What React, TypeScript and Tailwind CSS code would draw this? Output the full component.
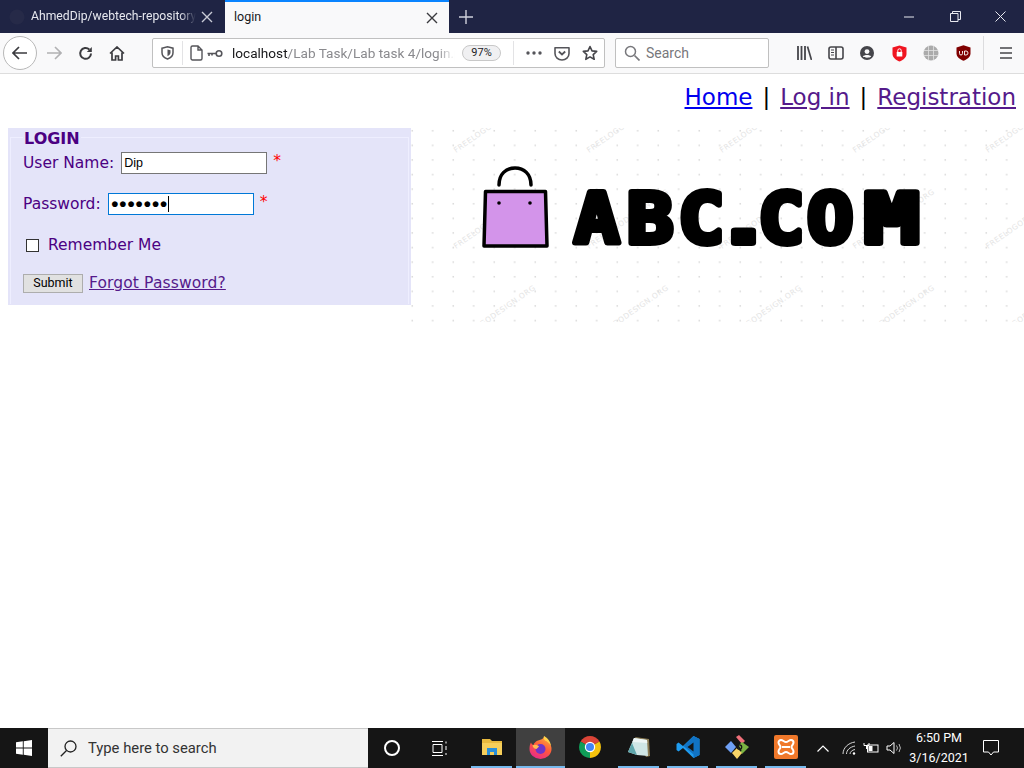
import React from "react";

const sans = "font-['DejaVu_Sans',sans-serif]";
const ui = "font-['Roboto',sans-serif]";

function Ic({ w = 16, h = 16, vb, children, className = "" }: { w?: number; h?: number; vb?: string; children: React.ReactNode; className?: string }) {
  return (
    <svg width={w} height={h} viewBox={vb ?? `0 0 ${w} ${h}`} fill="none" className={"shrink-0 " + className}>
      {children}
    </svg>
  );
}

function TitleBar() {
  return (
    <div className="flex h-[33px] shrink-0 items-stretch bg-[#1f2444]">
      <div className="flex w-[225px] items-center pl-[9px] pr-[12px]">
        <Ic w={16} h={16}>
          <circle cx="8" cy="8" r="7.5" fill="#262a48" />
        </Ic>
        <span className={`ml-[6px] w-[165px] overflow-hidden whitespace-nowrap text-[12.2px] text-[#e6e7ee] ${ui} [mask-image:linear-gradient(to_right,black_90%,transparent)]`}>
          AhmedDip/webtech-repository
        </span>
        <Ic w={12} h={12} className="ml-auto">
          <path d="M1 1l10 10M11 1L1 11" stroke="#c9cbd6" strokeWidth="1.4" />
        </Ic>
      </div>
      <div className="flex w-[224px] items-center border-t-2 border-[#0a84ff] bg-[#f9f9fa] pl-[9px] pr-[11px]">
        <span className={`text-[12.5px] text-[#18181a] ${ui}`}>login</span>
        <Ic w={12} h={12} className="ml-auto">
          <path d="M1 1l10 10M11 1L1 11" stroke="#3a3a3e" strokeWidth="1.4" />
        </Ic>
      </div>
      <div className="ml-[10px] flex items-center">
        <Ic w={14} h={14}>
          <path d="M7 0v14M0 7h14" stroke="#cfd1dc" strokeWidth="1.4" />
        </Ic>
      </div>
      <div className="ml-auto flex items-center pr-[18px]">
        <Ic w={11} h={2}>
          <path d="M0 1h10" stroke="#e8e9f0" />
        </Ic>
        <Ic w={11} h={11} className="ml-[35px]">
          <path d="M.5 2.5h7.5v8H.5zM2.5 2.5v-2h8v8h-2.5" stroke="#e8e9f0" />
        </Ic>
        <Ic w={11} h={11} className="ml-[34px]">
          <path d="M.5.5l10 10M10.5.5l-10 10" stroke="#e8e9f0" />
        </Ic>
      </div>
    </div>
  );
}

function Toolbar() {
  return (
    <div className="flex h-[41px] shrink-0 items-center border-b border-[#dddddd] bg-[#f9f9fa]">
      <div className="ml-[3px] flex h-[34px] w-[34px] items-center justify-center rounded-full border border-[#b8b8b8] bg-white">
        <Ic w={16} h={14}>
          <path d="M1 7h14M7 1L1 7l6 6" stroke="#3b3b3f" strokeWidth="1.7" />
        </Ic>
      </div>
      <Ic w={16} h={14} className="ml-[9px]">
        <path d="M1 7h14M9 1l6 6-6 6" stroke="#b1b1b3" strokeWidth="1.6" />
      </Ic>
      <Ic w={15} h={15} className="ml-[16px]">
        <path d="M13 7.5a5.4 5.4 0 1 1-1.7-4" stroke="#3b3b3f" strokeWidth="2" />
        <path d="M13.8 1v5h-5z" fill="#3b3b3f" />
      </Ic>
      <Ic w={16} h={15} className="ml-[16px]">
        <path d="M1 7.5L8 1l7 6.5M3 6.5V14h3.6v-4h2.8v4H13V6.5" stroke="#3b3b3f" strokeWidth="1.7" />
      </Ic>

      <div className="ml-[27px] flex h-[30px] w-[453px] items-center rounded-[2px] border border-[#c0c0c0] bg-white">
        <Ic w={13} h={14} className="ml-[8px]">
          <path d="M1 2.2L6.5.8 12 2.2v4.6c0 3-2.6 5.2-5.5 6.2C3.600 12 1 9.800 1 6.800z" stroke="#55555a" strokeWidth="1.5" />
          <path d="M6.500 3.500L9.500 4.300v2.500c0 1.500-1.500 2.800-3 3.400z" fill="#55555a" />
        </Ic>
        <div className="ml-[8px] h-[24px] w-px bg-[#e3e3e5]" />
        <Ic w={13} h={16} className="ml-[7px]">
          <path d="M1 2.500a1.500 1.500 0 0 1 1.500-1.500H8l4 4v8.500a1.500 1.500 0 0 1-1.500 1.500h-8A1.500 1.500 0 0 1 1 13.500zM8 1v4h4" stroke="#55555a" strokeWidth="1.400" />
        </Ic>
        <Ic w={16} h={9} className="ml-[4px]">
          <circle cx="12" cy="4.500" r="2.800" stroke="#55555a" strokeWidth="1.600" />
          <path d="M0.500 4.500H9M2 4.500v2.500M5 4.500v2" stroke="#55555a" strokeWidth="1.600" />
        </Ic>
        <span className={`ml-[9px] w-[223px] overflow-hidden whitespace-nowrap text-[13.6px] text-[#8a8a8e] ${ui} [mask-image:linear-gradient(to_right,black_92%,transparent)]`}>
          <span className="text-[#18181a]">localhost</span>/Lab Task/Lab task 4/login.php
        </span>
        <span className={`ml-[7px] flex h-[16px] w-[39px] items-center justify-center rounded-full border border-[#c8c8c8] bg-[#f0f0f2] text-[11px] text-[#222226] ${ui}`}>
          97%
        </span>
        <div className="ml-[12px] h-[24px] w-px bg-[#e3e3e5]" />
        <Ic w={16} h={4} className="ml-[12px]">
          <circle cx="2" cy="2" r="1.700" fill="#55555a" />
          <circle cx="8" cy="2" r="1.700" fill="#55555a" />
          <circle cx="14" cy="2" r="1.700" fill="#55555a" />
        </Ic>
        <Ic w={16} h={15} className="ml-[12px]">
          <path d="M1 1.800h14v5.700a7 6.500 0 0 1-14 0z" stroke="#55555a" strokeWidth="1.600" strokeLinejoin="round" />
          <path d="M4.800 5.500L8 8.500l3.200-3" stroke="#55555a" strokeWidth="1.800" />
        </Ic>
        <Ic w={16} h={16} className="ml-[12px]">
          <path d="M8 1.500l2 4.400 4.700.5-3.500 3.200 1 4.700L8 11.900l-4.200 2.400 1-4.700-3.500-3.200 4.700-.5z" stroke="#45454a" strokeWidth="1.600" strokeLinejoin="round" />
        </Ic>
      </div>

      <div className="ml-[10px] flex h-[30px] w-[154px] items-center rounded-[2px] border border-[#c0c0c0] bg-white">
        <Ic w={16} h={16} className="ml-[8px]">
          <circle cx="6.500" cy="6.500" r="5" stroke="#77777b" strokeWidth="1.500" />
          <path d="M10.500 10.500l5 5" stroke="#77777b" strokeWidth="1.700" />
        </Ic>
        <span className={`ml-[6px] text-[14px] text-[#77777b] ${ui}`}>Search</span>
      </div>

      <Ic w={15} h={14} className="ml-[28px]">
        <path d="M1 0v14M4.500 0v14M8 0v14" stroke="#45454a" strokeWidth="1.800" />
        <path d="M10.500.500L14.500 14" stroke="#45454a" strokeWidth="1.700" />
      </Ic>
      <Ic w={16} h={14} className="ml-[16px]">
        <rect x="1" y="1" width="14" height="12" rx="2" stroke="#45454a" strokeWidth="1.600" />
        <path d="M8 1v12" stroke="#45454a" strokeWidth="1.600" />
        <path d="M3 4h3M3 6.500h3M3 9h3" stroke="#45454a" />
      </Ic>
      <Ic w={14} h={14} className="ml-[16px]">
        <circle cx="7" cy="7" r="7" fill="#45454a" />
        <circle cx="7" cy="5.600" r="2.400" fill="#f9f9fa" />
        <path d="M2.800 10.500c1.500-2 6.900-2 8.400 0-1.500 1.600-6.900 1.600-8.400 0z" fill="#f9f9fa" />
      </Ic>
      <Ic w={15} h={17} className="ml-[18px]">
        <path d="M7.500.500L14.500 2.500v6.500c0 3.500-3.500 6-7 7.500-3.500-1.500-7-4-7-7.500V2.500z" fill="#f01520" />
        <rect x="4.700" y="7" width="5.600" height="4.500" fill="#fff" />
        <path d="M5.800 7V5.500a1.700 1.700 0 0 1 3.400 0V7" stroke="#fff" />
      </Ic>
      <Ic w={16} h={16} className="ml-[16px]">
        <circle cx="8" cy="8" r="7.500" fill="#ababab" />
        <path d="M.5 5.500h15M.5 10.500h15M5.500.800v14.400M10.500.800v14.400" stroke="#e2e2e2" strokeWidth=".8" />
      </Ic>
      <Ic w={15} h={16} className="ml-[17px]">
        <path d="M7.500.300L14.500 2.500v6c0 3.500-3.500 6-7 7.300-3.500-1.300-7-3.800-7-7.300v-6z" fill="#800000" />
        <path d="M3.500 6v2.500a1.500 1.500 0 0 0 3 0V6M8.500 6v4h1.500a2 2 0 0 0 0-4z" stroke="#fff" strokeWidth=".9" />
      </Ic>
      <div className="ml-[12px] h-[34px] w-px bg-[#dcdcde]" />
      <Ic w={12} h={12} className="ml-[16px]">
        <path d="M0 1h12M0 6h12M0 11h12" stroke="#45454a" strokeWidth="1.700" />
      </Ic>
    </div>
  );
}

const logoLetters = [
  { ch: "A", x: 163, sx: 1.08 },
  { ch: "B", x: 216, sx: 1.1 },
  { ch: "C", x: 267, sx: 1.1 },
  { ch: ".", x: 302, sx: 1.45 },
  { ch: "C", x: 347, sx: 1.1 },
  { ch: "O", x: 396, sx: 1.1 },
  { ch: "M", x: 453, sx: 1.32 },
];

function Logo() {
  const cols = [-88, 45, 178, 311, 444, 577];
  const rows = [25, 121, 217];
  return (
    <svg width="613" height="194" viewBox="0 0 613 194" className="block">
      <defs>
        <pattern id="dots" x="0" y="0" width="20.500" height="14.600" patternUnits="userSpaceOnUse">
          <rect x="0.500" y="2" width="1.500" height="1.500" fill="#d8d8d8" />
        </pattern>
      </defs>
      <rect width="613" height="194" fill="url(#dots)" />
      {rows.map((y) =>
        cols.map((x) => (
          <text key={`${x}-${y}`} x={x} y={y} transform={`rotate(-35 ${x} ${y})`} fontSize="7.500" fontFamily="DejaVu Sans" fill="#e4e4e4" letterSpacing=".5">
            FREELOGODESIGN.ORG
          </text>
        )),
      )}
      <path d="M88 57c0-11 7-17 16-17s16 6 16 17" stroke="#000" strokeWidth="3.500" strokeLinecap="round" fill="none" />
      <path d="M74.500 63.500h60l1.500 54.500H73z" fill="#d394ea" stroke="#000" strokeWidth="3.500" strokeLinejoin="round" />
      <circle cx="88" cy="75" r="1.800" fill="#000" />
      <circle cx="119" cy="75" r="1.800" fill="#000" />
      <g fontFamily="DejaVu Sans Mono" fontWeight="700" fontSize="70" fill="#000" stroke="#000" strokeWidth="6" strokeLinejoin="round">
        {logoLetters.map((l, i) => (
          <text key={i} transform={`translate(${l.x} 115) scale(${l.sx} 1)`}>
            {l.ch}
          </text>
        ))}
      </g>
    </svg>
  );
}

function LoginForm() {
  return (
    <div className={`w-[403px] shrink-0 bg-[#e4e4f9] px-[2px] pb-[1px] ${sans} text-[15.5px] leading-[18px] text-[#4b0082]`}>
      <fieldset className="h-[176px] border border-b-0 border-[#eeeeff] pl-[12px]">
        <legend className="h-[18px] px-[1px] text-[16px] font-bold leading-[22px]">LOGIN</legend>
        <div className="mt-[6px] flex h-[22px] items-center">
          <span>User Name:</span>
          <input readOnly value="Dip" className="ml-[7px] h-[22px] w-[146px] border border-[#767676] bg-white px-[2px] font-['Liberation_Sans',sans-serif] text-[12.5px] text-black outline-none" />
          <span className="ml-[6px] -translate-y-[2px] text-[#ff0000]">*</span>
        </div>
        <div className="mt-[19px] flex h-[22px] items-center">
          <span>Password:</span>
          <div className="ml-[7px] flex h-[22px] w-[146px] items-center border border-[#0078d7] bg-white px-[2px] text-black">
            <span className="font-['Liberation_Sans',sans-serif] text-[13.5px]">●●●●●●●</span>
            <span className="h-[16px] w-px bg-black" />
          </div>
          <span className="ml-[6px] -translate-y-[2px] text-[#ff0000]">*</span>
        </div>
        <div className="mt-[21px] flex h-[18px] items-center pl-[3px]">
          <span className="h-[13px] w-[13px] border border-[#333333] bg-white" />
          <span className="ml-[9px]">Remember Me</span>
        </div>
        <div className="mt-[20px] flex h-[19px] items-center">
          <button className={`h-[19px] w-[60px] border border-[#adadad] bg-[#e1e1e1] ${ui} text-[12.5px] leading-none text-black`}>Submit</button>
          <a className="ml-[6px] -translate-y-px tracking-[0.12px] text-[#551a8b] underline">Forgot Password?</a>
        </div>
      </fieldset>
    </div>
  );
}

function TaskIcon({ children, on = false, active = false }: { children: React.ReactNode; on?: boolean; active?: boolean }) {
  return (
    <div className={"flex w-[49px] flex-col " + (active ? "bg-[#404040]" : "")}>
      <div className="flex flex-1 items-center justify-center">{children}</div>
      <div className={"h-[2px] " + (active ? "" : "mx-[4px] ") + (on ? "bg-[#76b9ed]" : "")} />
    </div>
  );
}

function Taskbar() {
  return (
    <div className="flex h-[40px] shrink-0 items-stretch bg-[#151515] text-white">
      <div className="flex w-[48px] items-center justify-center">
        <Ic w={16} h={16}>
          <path d="M0 2.300l6.800-1v6.200H0zM7.700 1.200L16 0v7.500H7.700zM0 8.400h6.800v6.300l-6.800-1zM7.700 8.400H16V16l-8.300-1.200z" fill="#fff" />
        </Ic>
      </div>
      <div className="flex w-[320px] items-center border-y border-[#c8c8c8] bg-[#f2f2f2] pl-[12px]">
        <Ic w={17} h={17}>
          <circle cx="10.500" cy="6.500" r="5.500" stroke="#222" strokeWidth="1.300" />
          <path d="M6.500 10.500L.8 16.200" stroke="#222" strokeWidth="1.300" />
        </Ic>
        <span className={`ml-[11px] text-[14.8px] text-[#333333] ${ui}`}>Type here to search</span>
      </div>
      <div className="flex w-[48px] items-center justify-center">
        <span className="h-[16px] w-[16px] rounded-full border-[2px] border-white" />
      </div>
      <div className="mr-[3px] flex w-[48px] items-center justify-center">
        <Ic w={17} h={15}>
          <path d="M0 .5h11M0 14.500h11M1 3.500h9v8H1zM14 .500v2M14 5v4M14 12v2" stroke="#fff" />
        </Ic>
      </div>
      <TaskIcon on>
        <Ic w={22} h={18}>
          <path d="M1 3V1h8l2 2h10v4H1z" fill="#e8b93e" />
          <path d="M1 5h20v12H1z" fill="#f6ce5a" />
          <path d="M6 10h10v7h-3v-3H9v3H6z" fill="#2a8fd9" />
        </Ic>
      </TaskIcon>
      <TaskIcon on active>
        <Ic w={23} h={23}>
          <defs>
            <linearGradient id="fx" x1="0.800" y1="0" x2="0.300" y2="1">
              <stop offset="0" stopColor="#ffb03a" />
              <stop offset="0.500" stopColor="#ff5a3c" />
              <stop offset="1" stopColor="#e8288c" />
            </linearGradient>
          </defs>
          <path d="M15 0c1 3 3 4 5 6 2 3 2.500 5 2.500 7a11 10 0 0 1-22 0C.5 10 1 8 2 6.500 2.500 8 3.500 9 4.500 9 5 7 6.500 5.500 9 4.500 12 3.500 15 3 15 0z" fill="url(#fx)" />
          <circle cx="11.500" cy="13" r="5" fill="#6f35c9" />
          <path d="M3.500 9.500c2-1.500 5-1 6.500 1l-2.500 2.500c-2 0-3.500-1.500-4-3.500z" fill="#ffbd4f" />
          <path d="M15 0c3 1.500 6.500 5 7 10-1.500-3-4-4.500-6-5.500-1-1-1.500-2.500-1-4.500z" fill="#ffd24a" />
        </Ic>
      </TaskIcon>
      <TaskIcon>
        <Ic w={22} h={22}>
          <path d="M11 11L1.500 5.500A11 11 0 0 1 20.500 5.500z" fill="#db4437" />
          <path d="M11 11L20.500 5.500A11 11 0 0 1 11 22z" fill="#f4c20d" />
          <path d="M11 11V22A11 11 0 0 1 1.500 5.500z" fill="#0f9d58" />
          <circle cx="11" cy="11" r="5.200" fill="#fff" />
          <circle cx="11" cy="11" r="4" fill="#4285f4" />
        </Ic>
      </TaskIcon>
      <TaskIcon on>
        <Ic w={24} h={22}>
          <path d="M8 1l14 2 1 17-4 1z" fill="#8a7b55" />
          <path d="M7 2l13 2 1 16-11-1L1 16z" fill="#cfe6e6" />
          <path d="M5 7l5 12-9-3z" fill="#5fa7ad" />
          <path d="M7 2l13 2 .300 3-15-1z" fill="#eef6f6" />
        </Ic>
      </TaskIcon>
      <TaskIcon on>
        <Ic w={24} h={24}>
          <path d="M17.500 1L23.500 4v16l-6 3L7 13l-4.500 3.500L.5 15V9l2-1.500L7 11z" fill="#1f9cf0" />
          <path d="M17.500 1l-10 10 10 8.500V23l6-3V4z" fill="#1173c4" />
          <path d="M17.500 7.500L11.500 12l6 4.500z" fill="#151515" />
        </Ic>
      </TaskIcon>
      <TaskIcon on>
        <Ic w={24} h={24}>
          <path d="M11 2l3-2 6 6-3 3z" fill="#f0707a" />
          <path d="M17 7l7 5-7 7-5-7z" fill="#7cb342" />
          <path d="M6 6l5 6-5 6-6-6z" fill="#6fa0f5" />
          <path d="M12 13l5 5-5 6-5-6z" fill="#f8d568" />
          <path d="M9 4l7 12" stroke="#151515" strokeWidth="1.500" />
          <circle cx="14.500" cy="12" r="2.200" stroke="#151515" strokeWidth="1.300" />
        </Ic>
      </TaskIcon>
      <TaskIcon on>
        <Ic w={24} h={24}>
          <rect width="24" height="24" rx="2" fill="#f0782a" />
          <path d="M4.500 7.500a2.500 2.500 0 0 1 2.500-2.500c2 0 3 2 5 2s3-2 5-2a2.500 2.500 0 0 1 2.500 2.500c0 2-2 3-2 4.500s2 2.500 2 4.500a2.500 2.500 0 0 1-2.500 2.500c-2 0-3-2-5-2s-3 2-5 2a2.500 2.500 0 0 1-2.500-2.500c0-2 2-3 2-4.500s-2-2.500-2-4.500zM8 12h8" stroke="#fff" strokeWidth="2" />
        </Ic>
      </TaskIcon>
      <div className="ml-[7px] flex items-center">
        <Ic w={12} h={7}>
          <path d="M.5 6.500L6 1l5.500 5.500" stroke="#fff" strokeWidth="1.200" />
        </Ic>
        <Ic w={14} h={14} className="ml-[13px]">
          <path d="M1 13C1 7 6 2 13 1M4.500 13c0-4 3.500-7 8.500-8M8 13c0-2 2-4 5-4.500" stroke="#d8d8d8" strokeWidth="1" />
          <circle cx="12" cy="12.500" r="1.200" fill="#fff" />
        </Ic>
        <Ic w={16} h={12} className="ml-[7px]">
          <rect x="4.500" y="3" width="10.500" height="7" stroke="#fff" />
          <rect x="5.500" y="4" width="4" height="5" fill="#fff" />
          <path d="M1 1v2.500h5V1M3.500 3.500V7" stroke="#fff" />
        </Ic>
        <Ic w={17} h={14} className="ml-[7px]">
          <path d="M1 5h3l4-3.500v11L4 9H1z" stroke="#fff" />
          <path d="M10.500 4.500a4 4 0 0 1 0 5M13 3a7 7 0 0 1 0 8" stroke="#b8b8b8" />
        </Ic>
        <div className={`ml-[7px] flex w-[58px] flex-col items-center text-[12.5px] leading-[20px] text-white ${ui}`}>
          <span>6:50 PM</span>
          <span className="whitespace-nowrap">3/16/2021</span>
        </div>
        <Ic w={16} h={16} className="ml-[15px]">
          <path d="M.5.500h15v11.500h-5l-2.500 3-2.500-3h-5z" stroke="#fff" />
        </Ic>
      </div>
    </div>
  );
}

export default function App() {
  return (
    <div className="flex h-[768px] w-[1024px] flex-col overflow-hidden bg-white">
      <TitleBar />
      <Toolbar />
      <main className="min-h-0 flex-1">
        <nav className={`mt-[5px] flex h-[36px] items-center justify-end pr-[8px] text-[23px] ${sans} text-black`}>
          <a className="text-[#0000ee] underline">Home</a>
          <span className="mx-[10px]">|</span>
          <a className="text-[#551a8b] underline">Log in</a>
          <span className="mx-[10px]">|</span>
          <a className="text-[#551a8b] underline">Registration</a>
        </nav>
        <div className="mt-[13px] flex items-start pl-[8px]">
          <LoginForm />
          <Logo />
        </div>
      </main>
      <Taskbar />
    </div>
  );
}
